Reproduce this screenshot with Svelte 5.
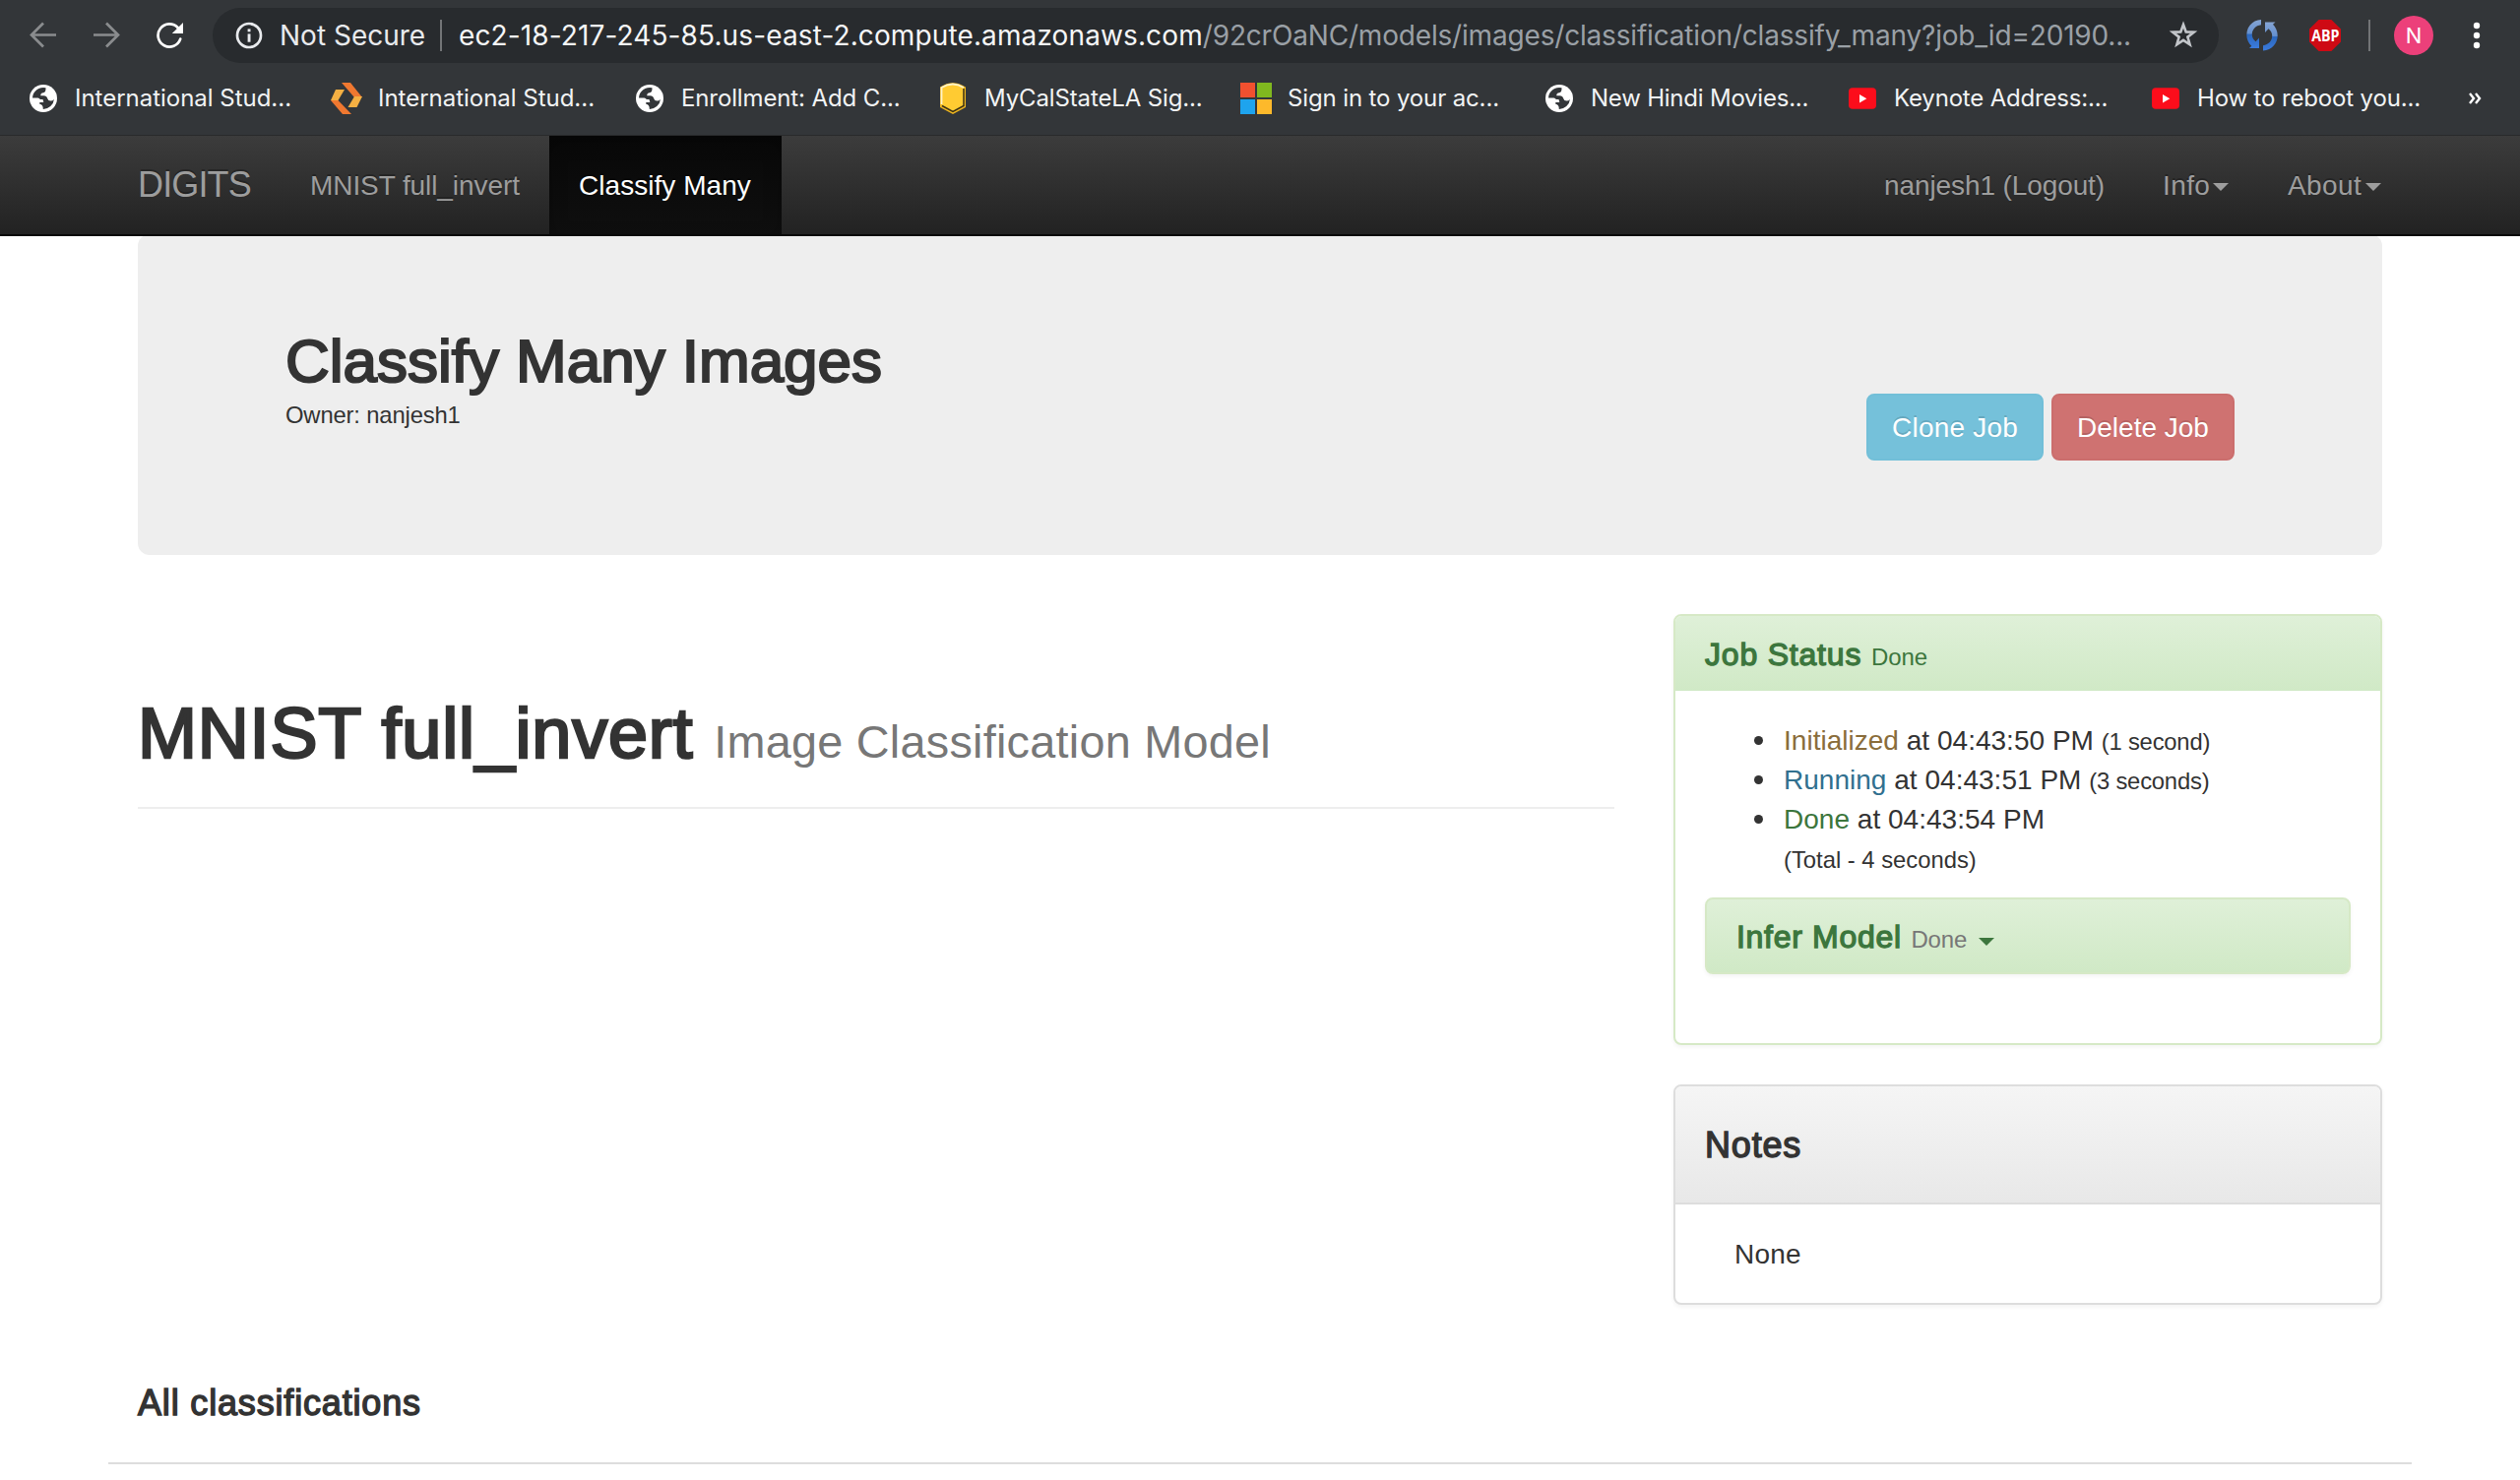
<script>
  const bookmarks = [
    { icon: 'globe', label: 'International Stud...', ls: -0.02 },
    { icon: 'chevrons', label: 'International Stud...', ls: -0.02 },
    { icon: 'globe', label: 'Enrollment: Add C...', ls: -0.12 },
    { icon: 'shield', label: 'MyCalStateLA Sig...', ls: -0.13 },
    { icon: 'windows', label: 'Sign in to your ac...', ls: -0.13 },
    { icon: 'globe', label: 'New Hindi Movies...', ls: -0.22 },
    { icon: 'youtube', label: 'Keynote Address:...', ls: -0.18 },
    { icon: 'youtube', label: 'How to reboot you...', ls: -0.15 }
  ];
  const history = [
    { state: 'Initialized', kind: 'warning', time: '04:43:50 PM', note: '(1 second)' },
    { state: 'Running', kind: 'info', time: '04:43:51 PM', note: '(3 seconds)' },
    { state: 'Done', kind: 'done', time: '04:43:54 PM', note: '' }
  ];
</script>

<div class="page">
  <header class="browser">
    <div class="toolbar">
      <div class="controls">
        <svg class="dim" width="28" height="28" viewBox="0 0 28 28"><path d="M27 13.5H3M14 1.5L2 13.5l12 12" /></svg>
        <svg class="dim" width="28" height="28" viewBox="0 0 28 28"><path d="M1 13.5h24M14 1.5l12 12-12 12" /></svg>
        <svg class="reload" width="30" height="28" viewBox="0 0 30 28">
          <path d="M25.2 17.6A11.6 11.6 0 1 1 22.6 6" />
          <polygon points="28,1 28,12 16.8,12" />
        </svg>
      </div>
      <div class="omnibox">
        <svg width="28" height="28" viewBox="0 0 28 28">
          <circle cx="14" cy="14" r="12" fill="none" stroke="#e8eaed" stroke-width="2.7" />
          <rect x="12.6" y="7.4" width="2.9" height="2.9" fill="#e8eaed" />
          <rect x="12.6" y="12.4" width="2.9" height="8.3" fill="#e8eaed" />
        </svg>
        <span class="secure">Not Secure</span>
        <span class="bar"></span>
        <span class="url"><span class="host">ec2-18-217-245-85.us-east-2.compute.amazonaws.com</span><span class="path">/92crOaNC/models/images/classification/classify_many?job_id=20190...</span></span>
        <svg width="30" height="30" viewBox="0 0 30 30">
          <path d="M15 4l2.700 7.400 8 .300-6.300 4.900 2.200 7.700L15 19.900l-6.600 4.400 2.200-7.700L4.300 11.700l8-.300z" fill="none" stroke="#c3c6ca" stroke-width="2.600" />
        </svg>
      </div>
      <div class="extensions">
        <svg width="32" height="32" viewBox="0 0 32 32">
          <defs>
            <linearGradient id="sync" x1="0" y1="0" x2="0" y2="1">
              <stop offset="0" stop-color="#86a5d4" /><stop offset=".48" stop-color="#6490cf" /><stop offset=".52" stop-color="#2b67bd" /><stop offset="1" stop-color="#3b7bdc" />
            </linearGradient>
          </defs>
          <path fill="url(#sync)" d="M15 0C6 .5.300 7.500.300 15.500c0 4.500 2 8.500 5 11.200L3 29h10V18.500l-3.500 3.700C7.300 20.500 5.800 18 5.800 15.200 5.800 10 9.500 6 15 5.300z" />
          <path fill="url(#sync)" d="M17 31.500c9-.500 14.700-7.500 14.700-15.500 0-4.500-2-8.500-4.700-11.200L29.500 2.500H19V13l3.500-3.700c2.200 1.700 3.700 4 3.700 7 0 5.200-3.700 9.200-9.200 10z" />
        </svg>
        <div class="abp"><span>ABP</span></div>
        <span class="bar"></span>
        <div class="avatar">N</div>
        <svg class="dots" width="8" height="28" viewBox="0 0 8 28" fill="#fff"><circle cx="4" cy="4" r="3.200" /><circle cx="4" cy="14" r="3.200" /><circle cx="4" cy="24" r="3.200" /></svg>
      </div>
    </div>
    <div class="bookmarks">
      {#each bookmarks as b}
        <div class="bookmark">
          {#if b.icon === 'globe'}
            <svg width="32" height="32" viewBox="0 0 32 32">
              <circle cx="16" cy="16" r="14" fill="#fff" />
              <path fill="#333639" d="M18.500 5.200A11 11 0 0 0 5 15.500H10.500Q12 15.500 12.800 17H15.500L16.300 20H12.300V21.800Q15.800 22 15.800 26.900A11 11 0 0 0 26.900 17Q25.500 18.500 23.500 18.500 20.800 18.500 20.300 16.300 19.500 13.200 16.500 13.200H13.300Q13 10.500 16 10.200 18.800 9.800 18.500 5.200z" />
            </svg>
          {:else if b.icon === 'chevrons'}
            <svg width="32" height="32" viewBox="0 0 32 32">
              <path fill="#f5b043" d="M5 7h9L7.500 18H0z" />
              <path fill="#f07830" d="M0 18h7.500L21 32h-9z" />
              <path fill="#f07830" d="M11 0h9l12 15h-8z" />
              <path fill="#f5b043" d="M24 14h8l-5.500 11H17.500z" />
            </svg>
          {:else if b.icon === 'shield'}
            <svg width="32" height="32" viewBox="0 0 32 32">
              <path fill="#edb51f" d="M3 4.500Q16-4 29 4.500V25L16 32 3 25z" />
              <path fill="#ffcb32" d="M5 5.500Q16-2 27 5.500V23.500l-11 6-11-6z" />
              <path fill="none" stroke="#3a3015" stroke-width="1.500" d="M27 6V23.500l-11 6-11-6" />
              <path fill="none" stroke="#fff3c8" stroke-width="1.800" d="M4.500 22V5Q16-2 27 5" />
            </svg>
          {:else if b.icon === 'windows'}
            <svg width="32" height="32" viewBox="0 0 32 32">
              <path fill="#f1502f" d="M0 0h15v15H0z" /><path fill="#80b81f" d="M17 0h15v15H17z" />
              <path fill="#1ea4ee" d="M0 17h15v15H0z" /><path fill="#fdb92b" d="M17 17h15v15H17z" />
            </svg>
          {:else}
            <svg width="32" height="32" viewBox="0 0 32 32">
              <rect x="2" y="5.300" width="28" height="21.500" rx="4" fill="#fc0d1b" /><path fill="#fff" d="M13 12v8.500l7.300-4.200z" />
            </svg>
          {/if}
          <span style:letter-spacing="{b.ls}px">{b.label}</span>
        </div>
      {/each}
      <svg class="more" width="14" height="14" viewBox="0 0 14 14"><path d="M2 2l4 5-4 5M8 2l4 5-4 5" /></svg>
    </div>
  </header>

  <nav class="navbar">
    <span class="brand">DIGITS</span>
    <span class="model">MNIST full_invert</span>
    <span class="active">Classify Many</span>
    <span class="spacer"></span>
    <span class="user">nanjesh1 (Logout)</span>
    <span class="menu info-menu">Info<i class="caret"></i></span>
    <span class="menu about-menu">About<i class="caret"></i></span>
  </nav>

  <main>
    <section class="jumbotron">
      <div>
        <h2>Classify Many Images</h2>
        <p class="owner">Owner: nanjesh1</p>
      </div>
      <div class="actions">
        <button class="clone">Clone Job</button>
        <button class="delete">Delete Job</button>
      </div>
    </section>

    <div class="columns">
      <section class="model-head">
        <h1>MNIST full_invert <small>Image Classification Model</small></h1>
      </section>
      <aside>
        <section class="panel status">
          <div class="panel-head"><h4>Job Status <small>Done</small></h4></div>
          <div class="panel-body">
            <ul>
              {#each history as h}
                <li class="event"><span class={h.kind}>{h.state}</span> at {h.time} <small>{h.note}</small></li>
              {/each}
              <li><small class="total">(Total - 4 seconds)</small></li>
            </ul>
            <div class="infer"><h4>Infer Model <small>Done</small></h4><i class="caret"></i></div>
          </div>
        </section>
        <section class="panel notes">
          <div class="panel-head"><h3>Notes</h3></div>
          <div class="note-body">None</div>
        </section>
      </aside>
    </div>

    <h3 class="all">All classifications</h3>
    <div class="rule"></div>
  </main>
</div>

<style>
  :global(body) { background: #fff; overflow: hidden; }
  .page { width: 2560px; height: 1504px; overflow: hidden; background: #fff; color: #333; font: 28px/40px "Liberation Sans", Arial, sans-serif; }
  h1, h2, h3, h4, p, ul { margin: 0; padding: 0; }
  h1, h2, h3, h4 { font-weight: 400; -webkit-text-stroke: 1.3px currentColor; }
  svg { display: block; flex: none; }

  .browser { box-sizing: border-box; height: 138px; background: #333639; border-bottom: 1px solid #292a2b; font-family: Inter, sans-serif; color: #f1f3f4; }
  .toolbar { display: flex; align-items: center; height: 72px; }
  .controls { display: flex; align-items: center; gap: 36px; width: 186px; padding-left: 30px; }
  .controls svg { fill: none; stroke-width: 2.7; }
  .controls .dim { stroke: #8a8c8e; }
  .controls .reload { stroke: #fff; stroke-linecap: round; }
  .controls .reload polygon { fill: #fff; stroke: none; }
  .omnibox { box-sizing: border-box; display: flex; align-items: center; width: 2038px; height: 56px; padding-left: 23px; border-radius: 28px; background: #282b2e; font-size: 28px; white-space: nowrap; }
  .secure { width: 163px; margin-left: 17px; color: #e8eaed; }
  .bar { width: 2px; height: 32px; flex: none; background: #727476; }
  .url { width: 1737px; margin-left: 17px; }
  .host { letter-spacing: .12px; color: #f5f6f7; }
  .path { letter-spacing: -.18px; color: #9aa0a6; }
  .extensions { display: flex; align-items: center; padding-left: 28px; }
  .abp { display: flex; align-items: center; justify-content: center; width: 32px; height: 32px; margin: 0 28px 0 32px; background: #ce0a14; clip-path: polygon(30% 0, 70% 0, 100% 30%, 100% 70%, 70% 100%, 30% 100%, 0 70%, 0 30%); color: #fff; font: 700 16.5px/32px "Open Sans", sans-serif; }
  .abp span { flex: none; transform: scaleX(.86); }
  .avatar { width: 40px; height: 40px; margin-left: 24px; border-radius: 50%; background: #ec407a; color: #fff; font: 22px/40px Inter, sans-serif; text-align: center; }
  .dots { margin-left: 40px; }
  .bookmarks { display: flex; align-items: center; height: 56px; padding-left: 28px; font-size: 24px; white-space: nowrap; }
  .bookmark { display: flex; align-items: center; gap: 16px; width: 308px; flex: none; }
  .bookmark span { line-height: 32px; }
  .more { margin-left: 15px; fill: none; stroke: #fff; stroke-width: 2.4; }

  .navbar { position: relative; z-index: 1; display: flex; height: 100px; padding: 0 140px; border-bottom: 2px solid #080808; background: linear-gradient(#3c3c3c, #222); color: #9d9d9d; line-height: 101px; text-shadow: 0 -2px 0 rgba(0, 0, 0, .25); white-space: nowrap; }
  .brand { width: 175px; font-size: 36px; line-height: 100px; letter-spacing: -.85px; }
  .model { width: 243px; letter-spacing: -.08px; }
  .active { box-sizing: border-box; width: 236px; padding-left: 30px; background: linear-gradient(#080808, #0f0f0f); box-shadow: inset 0 6px 18px rgba(0, 0, 0, .25); color: #fff; letter-spacing: .05px; }
  .spacer { flex: 1; }
  .user { width: 283px; letter-spacing: -.1px; }
  .menu { display: flex; align-items: center; }
  .info-menu { width: 127px; letter-spacing: .4px; }
  .about-menu { width: 96px; letter-spacing: .4px; }
  .caret { width: 0; height: 0; flex: none; border: 8px solid transparent; border-top-color: currentColor; border-bottom: 0; }
  .navbar .caret { margin: 4px 0 0 4px; }
  .navbar .info-menu .caret { margin-left: 3px; }

  main { padding: 0 140px; }
  .jumbotron { box-sizing: border-box; display: flex; justify-content: space-between; height: 326px; margin-top: -2px; padding: 94px 150px 0; border-radius: 12px; background: #eee; }
  h2 { font-size: 62px; line-height: 69px; letter-spacing: -.02px; -webkit-text-stroke-width: 2.2px; }
  .owner { margin-top: 1px; font-size: 23.8px; line-height: 40px; letter-spacing: -.15px; }
  .actions { display: flex; gap: 8px; padding-top: 68px; }
  button { height: 68px; padding: 0; border: 2px solid transparent; border-radius: 8px; color: #fff; font: 28px/65px "Liberation Sans", Arial, sans-serif; text-shadow: 0 -2px 0 rgba(0, 0, 0, .13); }
  .clone { width: 180px; background: #75c1da; border-color: #72bfd8; letter-spacing: .2px; }
  .delete { width: 186px; background: #cf7271; border-color: #cb6e6d; letter-spacing: 0; }

  .columns { display: flex; justify-content: space-between; padding-top: 60px; }
  .model-head { width: 1500px; height: 115px; padding-top: 81px; border-bottom: 2px solid #eee; }
  h1 { font-size: 72px; line-height: 80px; letter-spacing: .8px; -webkit-text-stroke-width: 2.6px; white-space: nowrap; }
  small { font-size: 23.8px; line-height: 1; letter-spacing: -.2px; -webkit-text-stroke: 0; }
  .total { letter-spacing: 0; }
  h1 small { font-size: 46.8px; letter-spacing: .25px; color: #777; }

  aside { width: 720px; }
  .panel { border: 2px solid #ddd; border-radius: 8px; background: #fff; box-shadow: 0 2px 4px rgba(0, 0, 0, .05); overflow: hidden; }
  .status { border-color: #d6e9c6; }
  .panel-head { padding-left: 30px; }
  .status .panel-head { height: 76px; background: linear-gradient(#dff0d8, #d0e9c6); color: #3c763d; }
  h4 { font-size: 32px; line-height: 79px; letter-spacing: .8px; }
  h4 small { font-size: 24px; letter-spacing: -.1px; }
  .panel-body { height: 327px; padding: 31px 30px 0; }
  ul { list-style: none; padding-left: 80px; }
  li { height: 40px; white-space: pre; letter-spacing: .02px; }
  .event::before { content: ""; display: inline-block; width: 9px; height: 9px; margin: 0 21px 5px -30px; border-radius: 50%; background: #333; }
  .warning { color: #8a6d3b; }
  .info { color: #31708f; }
  .done { color: #3c763d; }
  .infer { box-sizing: border-box; display: flex; align-items: center; height: 78px; margin-top: 19px; padding-left: 30px; border: 2px solid #d6e9c6; border-radius: 8px; background: linear-gradient(#dff0d8, #d0e9c6); box-shadow: 0 2px 4px rgba(0, 0, 0, .05); color: #3c763d; }
  .infer h4 { padding-top: 2px; letter-spacing: .7px; }
  .infer small { color: #777; letter-spacing: -.1px; }
  .infer .caret { margin: 11px 0 0 12px; }
  .notes { margin-top: 40px; }
  .notes .panel-head { height: 118px; border-bottom: 2px solid #ddd; background: linear-gradient(#f5f5f5, #e8e8e8); }
  h3 { font-size: 36px; line-height: 119px; letter-spacing: .83px; -webkit-text-stroke-width: 1.4px; }
  .note-body { height: 100px; padding-left: 60px; line-height: 101px; letter-spacing: .2px; }
  .all { margin-top: 80px; line-height: 40px; }
  .rule { height: 2px; margin: 40px -30px 0; background: #ddd; }
</style>
